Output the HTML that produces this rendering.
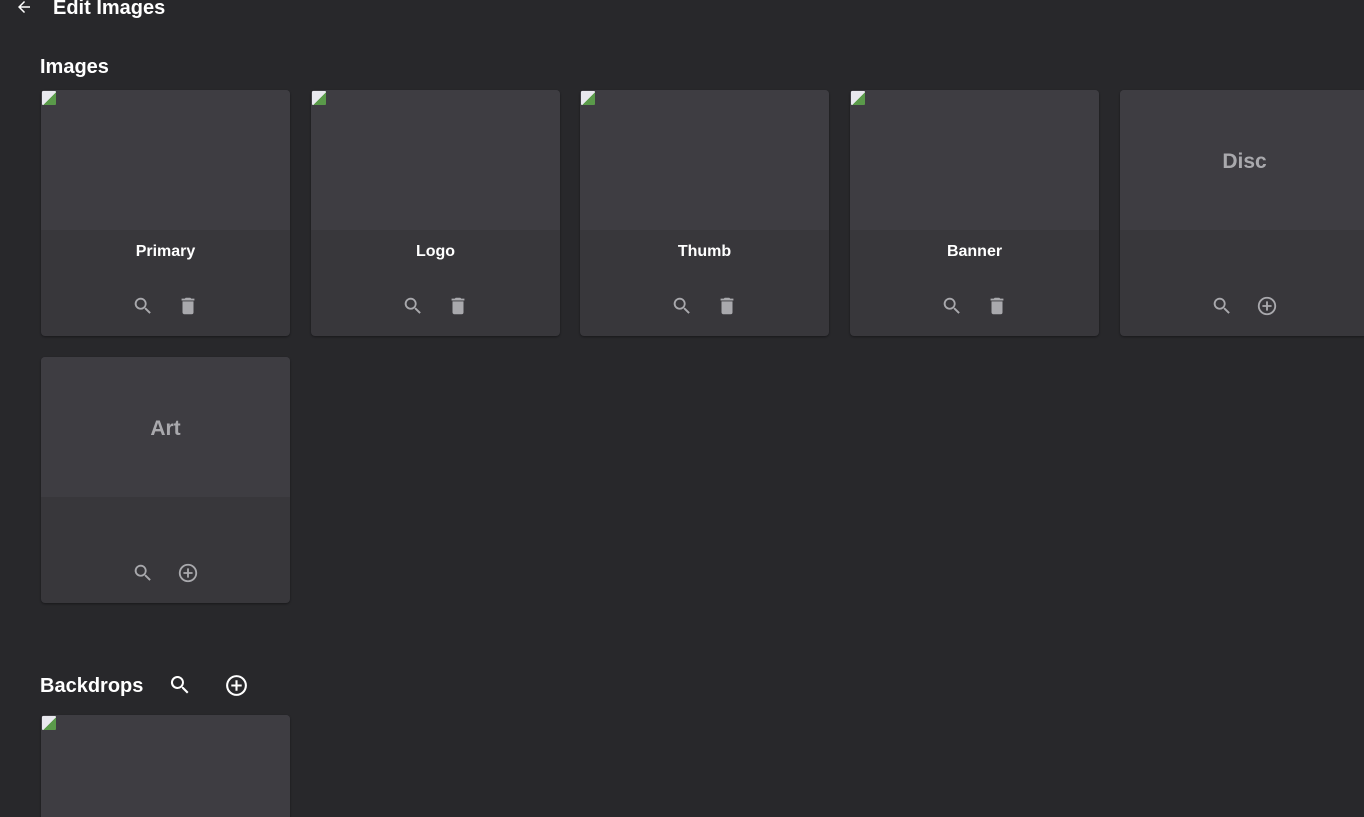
<!DOCTYPE html>
<html><head><style>
html,body{margin:0;height:817px;overflow:hidden}
body{background:#28282b;font-family:"Liberation Sans",sans-serif;color:#fff;width:1364px;position:relative}
.h{position:absolute;font-weight:bold}
.card{position:absolute;width:249px;height:246px;background:#38373b;border-radius:4px;overflow:hidden;box-shadow:0 1px 2px rgba(0,0,0,.4)}
.top{height:140px;background:#3e3d42;position:relative}
.top .ph{position:absolute;left:1px;top:1px;width:14px;height:14px;background:linear-gradient(135deg,#e8e8ee 55%,#5a9a4a 55%);border-radius:1px}
.top .lbl{position:absolute;width:100%;text-align:center;top:60px;font-size:21px;font-weight:bold;color:#a9a9ad}
.t{position:absolute;top:153px;width:100%;text-align:center;font-weight:bold;font-size:16px}
.ic{position:absolute;top:205px}
</style></head><body>
<svg style="position:absolute;left:14px;top:-2px" width="20" height="18" viewBox="0 0 24 24"><path d="M20 11H7.8l5.6-5.6L12 4l-8 8 8 8 1.4-1.4L7.8 13H20z" fill="#fff"/></svg>
<div class="h" style="left:53px;top:-3px;font-size:20px">Edit Images</div>
<div class="h" style="left:40px;top:56px;font-size:20px">Images</div>

<svg width="0" height="0" style="position:absolute"><defs>
<g id="s"><path d="M15.5 14h-.8l-.3-.3A6.5 6.5 0 1 0 9.5 16a6.5 6.5 0 0 0 4.2-1.6l.3.3v.8l5 5 1.5-1.5-5-5zm-6 0a4.5 4.5 0 1 1 0-9 4.5 4.5 0 0 1 0 9z"/></g>
<g id="d"><path d="M6 19c0 1.1.9 2 2 2h8a2 2 0 0 0 2-2V7H6v12zM19 4h-3.5l-1-1h-5l-1 1H5v2h14V4z"/></g>
<g id="a"><path d="M13 7h-2v4H7v2h4v4h2v-4h4v-2h-4V7zm-1-5a10 10 0 1 0 0 20 10 10 0 0 0 0-20zm0 18a8 8 0 1 1 0-16 8 8 0 0 1 0 16z"/></g>
</defs></svg>

<div class="card" style="left:41px;top:90px"><div class="top"><div class="ph"></div></div><div class="t">Primary</div>
<svg class="ic" style="left:91px" width="22" height="22" viewBox="0 0 24 24" fill="#a9a9ad"><use href="#s"/></svg><svg class="ic" style="left:136px" width="22" height="22" viewBox="0 0 24 24" fill="#a9a9ad"><use href="#d"/></svg></div>
<div class="card" style="left:311px;top:90px"><div class="top"><div class="ph"></div></div><div class="t">Logo</div>
<svg class="ic" style="left:91px" width="22" height="22" viewBox="0 0 24 24" fill="#a9a9ad"><use href="#s"/></svg><svg class="ic" style="left:136px" width="22" height="22" viewBox="0 0 24 24" fill="#a9a9ad"><use href="#d"/></svg></div>
<div class="card" style="left:580px;top:90px"><div class="top"><div class="ph"></div></div><div class="t">Thumb</div>
<svg class="ic" style="left:91px" width="22" height="22" viewBox="0 0 24 24" fill="#a9a9ad"><use href="#s"/></svg><svg class="ic" style="left:136px" width="22" height="22" viewBox="0 0 24 24" fill="#a9a9ad"><use href="#d"/></svg></div>
<div class="card" style="left:850px;top:90px"><div class="top"><div class="ph"></div></div><div class="t">Banner</div>
<svg class="ic" style="left:91px" width="22" height="22" viewBox="0 0 24 24" fill="#a9a9ad"><use href="#s"/></svg><svg class="ic" style="left:136px" width="22" height="22" viewBox="0 0 24 24" fill="#a9a9ad"><use href="#d"/></svg></div>
<div class="card" style="left:1120px;top:90px"><div class="top"><div class="lbl">Disc</div></div>
<svg class="ic" style="left:91px" width="22" height="22" viewBox="0 0 24 24" fill="#a9a9ad"><use href="#s"/></svg><svg class="ic" style="left:136px" width="22" height="22" viewBox="0 0 24 24" fill="#a9a9ad"><use href="#a"/></svg></div>
<div class="card" style="left:41px;top:357px"><div class="top"><div class="lbl">Art</div></div>
<svg class="ic" style="left:91px" width="22" height="22" viewBox="0 0 24 24" fill="#a9a9ad"><use href="#s"/></svg><svg class="ic" style="left:136px" width="22" height="22" viewBox="0 0 24 24" fill="#a9a9ad"><use href="#a"/></svg></div>

<div class="h" style="left:40px;top:675px;font-size:20px">Backdrops</div>
<svg style="position:absolute;left:168px;top:673px" width="24" height="24" viewBox="0 0 24 24" fill="#fff"><use href="#s"/></svg>
<svg style="position:absolute;left:224px;top:673px" width="25" height="25" viewBox="0 0 24 24" fill="#fff"><use href="#a"/></svg>
<div class="card" style="left:41px;top:715px;background:#3e3d42"><div class="top"><div class="ph"></div></div></div>
</body></html>
